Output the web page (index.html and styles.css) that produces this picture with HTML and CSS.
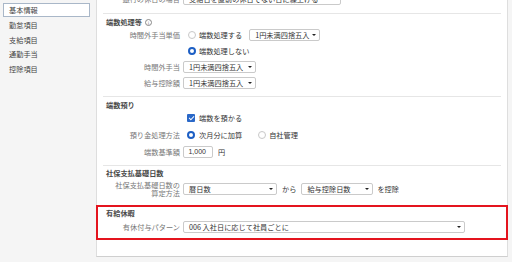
FILE: index.html
```html
<!DOCTYPE html>
<html lang="ja">
<head>
<meta charset="utf-8">
<link rel="stylesheet" href="styles.css">
</head>
<body>
<div class="app">
  <nav class="side">
    <div class="nav-item active">基本情報</div>
    <div class="nav-item">勤怠項目</div>
    <div class="nav-item">支給項目</div>
    <div class="nav-item">通勤手当</div>
    <div class="nav-item">控除項目</div>
  </nav>
  <main class="panel">
    <section class="sec sec-top">
      <div class="grid">
        <div class="lbl">銀行の休日の場合</div>
        <div class="ctl"><div class="sel w-top">支給日を直前の休日でない日に繰上げる</div></div>
      </div>
    </section>

    <section class="sec s1">
      <h3 class="head">端数処理等<span class="info">i</span></h3>
      <div class="grid g1">
        <div class="lbl">時間外手当単価</div>
        <div class="ctl"><span class="radio"></span><span class="opt">端数処理する</span><div class="sel w71">1円未満四捨五入</div></div>
        <div class="lbl"></div>
        <div class="ctl"><span class="radio on"></span><span class="opt">端数処理しない</span></div>
        <div class="lbl">時間外手当</div>
        <div class="ctl"><div class="sel w73">1円未満四捨五入</div></div>
        <div class="lbl">給与控除額</div>
        <div class="ctl"><div class="sel w73">1円未満四捨五入</div></div>
      </div>
    </section>

    <section class="sec s2">
      <h3 class="head">端数預り</h3>
      <div class="grid g2">
        <div class="lbl"></div>
        <div class="ctl"><span class="check"></span><span class="opt">端数を預かる</span></div>
        <div class="lbl">預り金処理方法</div>
        <div class="ctl"><span class="radio on r2"></span><span class="opt">次月分に加算</span><span class="radio r2 far"></span><span class="opt">自社管理</span></div>
        <div class="lbl">端数基準額</div>
        <div class="ctl"><div class="num">1,000</div><span class="unit">円</span></div>
      </div>
    </section>

    <section class="sec s3">
      <h3 class="head">社保支払基礎日数</h3>
      <div class="grid g3">
        <div class="lbl two">社保支払基礎日数の<br>算定方法</div>
        <div class="ctl"><div class="sel w94">暦日数</div><span class="word">から</span><div class="sel w72">給与控除日数</div><span class="word last">を控除</span></div>
      </div>
    </section>

    <section class="sec s4 highlight">
      <h3 class="head">有給休暇</h3>
      <div class="grid g4">
        <div class="lbl">有休付与パターン</div>
        <div class="ctl"><div class="sel w282">006 入社日に応じて社員ごとに</div></div>
      </div>
    </section>
  </main>
</div>
</body>
</html>
```
FILE: styles.css
```css
* { box-sizing: border-box; }
html, body { margin: 0; padding: 0; }
body {
  background: #f5f5f5;
  font-family: "Noto Sans CJK JP", "Noto Sans", sans-serif;
  font-size: 7.2px;
  color: #333;
  width: 512px;
  height: 262px;
  overflow: hidden;
}
.app { display: flex; align-items: flex-start; }

.side {
  width: 96px;
  padding: 3px 6px 0 3px;
  display: flex;
  flex-direction: column;
  gap: 0.4px;
}
.nav-item {
  height: 14px;
  line-height: 14px;
  padding-left: 5px;
  color: #444;
  border: 1px solid transparent;
}
.nav-item.active {
  background: #fff;
  border-color: #a9b7c8;
  line-height: 12px;
}

.panel {
  width: 412px;
  margin-top: -12px;
  background: #fff;
  border: 1px solid #dedede;
  border-bottom-color: #cfcfcf;
  padding-bottom: 16px;
}

.sec {
  margin: 0 6px;
  padding: 3px 0 6px 3px;
  border-top: 1px solid #e6e6e6;
}
.sec-top { border-top: none; padding: 3px 0 7px 3px; }

.head {
  margin: 0;
  height: 10px;
  line-height: 10px;
  font-size: 7.2px;
  font-weight: bold;
  color: #4a4a4a;
  display: flex;
  align-items: center;
}

.info {
  width: 7px;
  height: 7px;
  margin-left: 3px;
  border: 0.8px solid #888;
  border-radius: 50%;
  font-size: 5px;
  font-weight: normal;
  line-height: 6px;
  text-align: center;
  color: #777;
  font-family: "DejaVu Sans", sans-serif;
}

.grid {
  display: grid;
  grid-template-columns: 74px 1fr;
  column-gap: 3px;
  align-items: center;
}
.g1 { row-gap: 2px; margin-top: 1px; }
.g2 { row-gap: 3px; margin-top: 1px; }
.g3 { margin-top: 3px; }
.g4 { margin-top: 2px; }

.lbl {
  text-align: right;
  color: #777;
  line-height: 14px;
  white-space: nowrap;
}
.lbl.two { line-height: 8px; }

.ctl {
  display: flex;
  align-items: center;
  height: 14px;
  white-space: nowrap;
}
.ctl > * { flex: none; }

.sel {
  position: relative;
  height: 12px;
  line-height: 10px;
  border: 1px solid #cacaca;
  border-radius: 2px;
  background: #fff;
  padding: 0 10px 0 5px;
  color: #333;
  white-space: nowrap;
  overflow: hidden;
}
.sel::after {
  content: "";
  position: absolute;
  right: 3.5px;
  top: 4px;
  border-left: 2px solid transparent;
  border-right: 2px solid transparent;
  border-top: 2.5px solid #222;
}
.w-top { width: 158px; }
.w71 { width: 71px; margin-left: 7px; }
.w73 { width: 73px; }
.w94 { width: 94px; }
.w72 { width: 72px; }
.w282 { width: 282px; }

.radio {
  width: 8px;
  height: 8px;
  border: 1px solid #c8c8c8;
  border-radius: 50%;
  margin-left: 5px;
  margin-right: 3px;
  background: #fff;
}
.radio.on { border: 2.2px solid #1d5fc4; }
.radio.r2 { margin-left: 4px; margin-right: 4px; }
.radio.far { margin-left: 16px; margin-right: 3px; }

.check {
  position: relative;
  width: 8px;
  height: 8px;
  margin-left: 4px;
  margin-right: 4px;
  border-radius: 1px;
  background: #2a68c8;
}
.check::after {
  content: "";
  position: absolute;
  left: 2.6px;
  top: 0.8px;
  width: 2px;
  height: 4.2px;
  border-right: 1.2px solid #fff;
  border-bottom: 1.2px solid #fff;
  transform: rotate(45deg);
}

.opt { color: #333; }

.num {
  width: 30px;
  height: 12px;
  line-height: 10px;
  border: 1px solid #cacaca;
  border-radius: 2px;
  text-align: right;
  padding-right: 6px;
  font-family: "Liberation Sans", sans-serif;
  font-size: 7px;
}
.unit { margin-left: 5px; }
.word { margin: 0 5px 0 5px; }
.word.last { margin-left: 4px; }

.s3 { padding-top: 2px; padding-bottom: 8px; }
.highlight {
  margin: 0 -1px;
  border: 2px solid #e4141e;
  padding: 1px 0 4px 8px;
}
```
